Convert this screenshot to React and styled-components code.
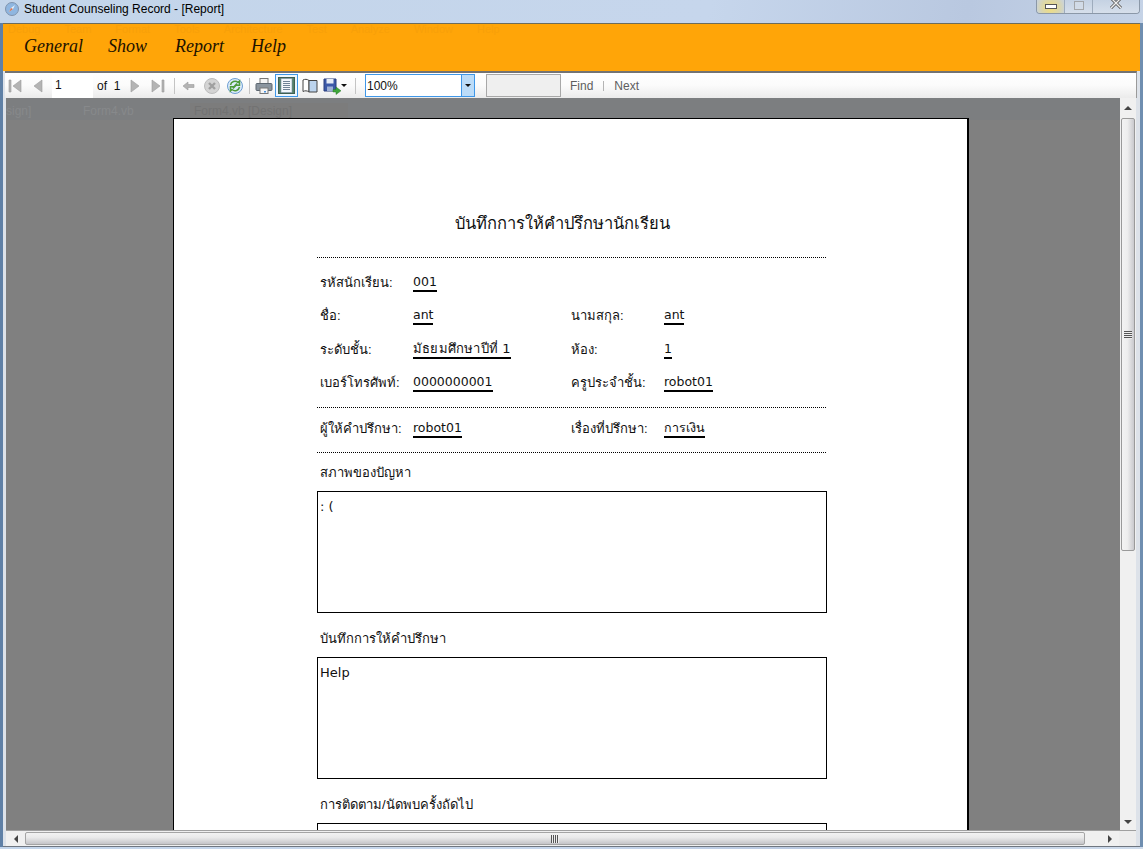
import React from "react";
import styled, { createGlobalStyle } from "styled-components";

const GlobalStyle = createGlobalStyle`
  html, body {
    margin: 0;
    padding: 0;
    width: 1143px;
    height: 849px;
    overflow: hidden;
    font-family: "Liberation Sans", "Noto Sans", "DejaVu Sans", sans-serif;
  }
`;

const App = () => {
  return (
    <Wrapper>
      <GlobalStyle />
      <TitleBar>
        <AppIcon viewBox="0 0 16 16">
          <circle cx="8" cy="8" r="6.5" fill="#8fb6e0" stroke="#7f93ad" />
          <path d="M5 11l4-3 2-4-4 3z" fill="#e9f2fb" />
          <path d="M5 11l4-3-2-1z" fill="#d9734e" />
        </AppIcon>
        <TitleText>Student Counseling Record - [Report]</TitleText>
        <WindowButtons>
          <WinButton $active>
            <MinGlyph />
          </WinButton>
          <WinButton>
            <MaxGlyph />
          </WinButton>
          <WinButton $wide>
            <svg width="16" height="12" viewBox="0 0 16 12">
              <path d="M3 1l10 10M13 1L3 11" stroke="#555" strokeWidth="3" />
              <path d="M3 1l10 10M13 1L3 11" stroke="#eee" strokeWidth="1.4" />
            </svg>
          </WinButton>
        </WindowButtons>
      </TitleBar>
      <Frame>
        <MenuBar>
          <MenuItem $w={84}>General</MenuItem>
          <MenuItem $w={67}>Show</MenuItem>
          <MenuItem $w={76}>Report</MenuItem>
          <MenuItem $w={50}>Help</MenuItem>
          <GhostMenu>
            {["Debug", "Team", "Format", "Tools", "Architecture", "Test", "Analyze", "Window", "Help"].map((t) => (
              <span key={t}>{t}</span>
            ))}
          </GhostMenu>
        </MenuBar>
        <Toolbar>
          <ToolBtn $ml={-2}><Arrow d="M3 3h2v12H3zM15 3v12L7 9z" /></ToolBtn>
          <ToolBtn><Arrow d="M13 3v12L5 9z" /></ToolBtn>
          <PageInput>1</PageInput>
          <OfLabel>of&nbsp;&nbsp;1</OfLabel>
          <ToolBtn><Arrow d="M5 3v12l8-6z" /></ToolBtn>
          <ToolBtn><Arrow d="M3 3v12l8-6zM13 3h2v12h-2z" /></ToolBtn>
          <Sep $ml={5} />
          <ToolBtn $ml={2}><Arrow d="M3 9l5-4v2.500h6v3H8V13z" /></ToolBtn>
          <ToolBtn>
            <svg width="18" height="18" viewBox="0 0 18 18">
              <circle cx="9" cy="9" r="7.5" fill="#d4d4d4" stroke="#bcbcbc" />
              <path d="M6 6l6 6M12 6l-6 6" stroke="#a0a0a0" strokeWidth="2.4" />
            </svg>
          </ToolBtn>
          <ToolBtn>
            <svg width="18" height="18" viewBox="0 0 18 18">
              <circle cx="9" cy="9" r="7.5" fill="#dcebfa" stroke="#6d9ed2" />
              <path d="M4.500 8a4.500 4.500 0 0 1 7.500-2.500L13.500 4v4.200H9.400L11 6.600" fill="none" stroke="#4d9a3a" strokeWidth="1.5" />
              <path d="M13.500 10a4.500 4.500 0 0 1-7.500 2.500L4.500 14V9.800h4.100L7 11.400" fill="none" stroke="#4d9a3a" strokeWidth="1.5" />
            </svg>
          </ToolBtn>
          <Sep $ml={3} />
          <ToolBtn $ml={2}>
            <svg width="18" height="18" viewBox="0 0 18 18">
              <rect x="5" y="1.5" width="8" height="6" fill="#f4f4f4" stroke="#777" />
              <rect x="1" y="6.5" width="16" height="7" rx="1" fill="#8a949e" stroke="#5c6670" />
              <rect x="5" y="11" width="8" height="5.5" fill="#f4f4f4" stroke="#777" />
              <rect x="9" y="14" width="2" height="1.5" fill="#4a90d9" />
            </svg>
          </ToolBtn>
          <SelectedBtn>
            <svg width="17" height="17" viewBox="0 0 17 17">
              <rect x="0.5" y="0.5" width="16" height="16" fill="#55806a" stroke="#3f5f50" />
              <rect x="3" y="1.500" width="11" height="14" fill="#f3f7fb" stroke="#7c8fa3" strokeWidth=".6" />
              <path d="M5 4.500h7M5 6.500h7M5 8.500h7M5 10.500h7M5 12.500h7" stroke="#6f8296" />
            </svg>
          </SelectedBtn>
          <ToolBtn>
            <svg width="18" height="18" viewBox="0 0 18 18">
              <path d="M2 3c2-1 4-1 6 .5V15c-2-1.500-4-1.500-6-.5z" fill="#fff" stroke="#444" />
              <path d="M8 3.500h8V15H8z" fill="#bcd4ee" stroke="#444" />
            </svg>
          </ToolBtn>
          <ToolBtn>
            <svg width="20" height="18" viewBox="0 0 20 18">
              <path d="M1 2h12v12H1z" fill="#3c59a8" stroke="#2b3f7c" />
              <path d="M3.500 2h7v4.500h-7z" fill="#e6ecf6" />
              <path d="M4 9.500h6V14H4z" fill="#9db0d6" />
              <path d="M13 10v2.500h-3V15h3v2.500l5-3.700z" fill="#3ea63a" stroke="#2a7a2a" strokeWidth=".5" />
            </svg>
          </ToolBtn>
          <SmallCaret />
          <Sep $ml={8} />
          <ZoomBox>
            <ZoomValue>100%</ZoomValue>
            <ZoomDrop><SmallCaret $flat /></ZoomDrop>
          </ZoomBox>
          <FindInput />
          <FindLink $ml={9}>Find</FindLink>
          <FindDivider />
          <FindLink>Next</FindLink>
        </Toolbar>
        <ViewerRow>
          <Viewer>
            <GhostBand>
              <GhostWord $w={77}>sign]</GhostWord>
              <GhostWord $w={107}>Form4.vb</GhostWord>
              <GhostTab>Form4.vb [Design]</GhostTab>
            </GhostBand>
            <Page>
              <ReportTitle>บันทึกการให้คำปรึกษานักเรียน</ReportTitle>
              <Dotted />
              <FieldGrid $top={8}>
                <FieldLabel>รหัสนักเรียน:</FieldLabel>
                <FieldValue><Under>001</Under></FieldValue>
                <span />
                <span />
                <FieldLabel>ชื่อ:</FieldLabel>
                <FieldValue><Under>ant</Under></FieldValue>
                <FieldLabel>นามสกุล:</FieldLabel>
                <FieldValue><Under>ant</Under></FieldValue>
                <FieldLabel>ระดับชั้น:</FieldLabel>
                <FieldValue><Under $thai>มัธยมศึกษาปีที่ 1</Under></FieldValue>
                <FieldLabel>ห้อง:</FieldLabel>
                <FieldValue><Under>1</Under></FieldValue>
                <FieldLabel>เบอร์โทรศัพท์:</FieldLabel>
                <FieldValue><Under>0000000001</Under></FieldValue>
                <FieldLabel>ครูประจำชั้น:</FieldLabel>
                <FieldValue><Under>robot01</Under></FieldValue>
              </FieldGrid>
              <Dotted $top={7} />
              <FieldGrid $top={4}>
                <FieldLabel>ผู้ให้คำปรึกษา:</FieldLabel>
                <FieldValue><Under>robot01</Under></FieldValue>
                <FieldLabel>เรื่องที่ปรึกษา:</FieldLabel>
                <FieldValue><Under>การเงิน</Under></FieldValue>
              </FieldGrid>
              <Dotted $top={6} />
              <BoxLabel $top={10}>สภาพของปัญหา</BoxLabel>
              <TextBox>: (</TextBox>
              <BoxLabel $top={16}>บันทึกการให้คำปรึกษา</BoxLabel>
              <TextBox>Help</TextBox>
              <BoxLabel $top={16}>การติดตาม/นัดพบครั้งถัดไป</BoxLabel>
              <TextBox />
            </Page>
          </Viewer>
          <VScroll>
            <ScrollArrow $h={20}><Tri $dir="up" /></ScrollArrow>
            <VThumb>
              <Grip />
            </VThumb>
            <VTrack />
            <ScrollArrow $h={17}><Tri $dir="down" /></ScrollArrow>
          </VScroll>
        </ViewerRow>
        <HScroll>
          <HArrow $w={19}><Tri $dir="left" /></HArrow>
          <HThumb>
            <GripV />
          </HThumb>
          <HTrack />
          <HArrow $w={18}><Tri $dir="right" /></HArrow>
          <Corner />
        </HScroll>
      </Frame>
    </Wrapper>
  );
};

export default App;

const Arrow = ({ d }) => (
  <svg width="18" height="18" viewBox="0 0 18 18">
    <path d={d} fill="#b4b4b4" stroke="#9c9c9c" strokeWidth=".6" />
  </svg>
);

const Wrapper = styled.div`
  width: 1143px;
  height: 849px;
  display: flex;
  flex-direction: column;
  overflow: hidden;
  background: linear-gradient(100deg, #c3d5ea 0%, #c6d6ec 55%, #b9c8e0 75%, #cfdcec 100%);
`;

const TitleBar = styled.div`
  height: 23px;
  flex: none;
  display: flex;
  align-items: flex-start;
  padding-left: 4px;
  box-sizing: border-box;
`;

const AppIcon = styled.svg`
  width: 16px;
  height: 16px;
  margin-top: 1px;
`;

const TitleText = styled.div`
  margin-left: 4px;
  font-size: 12px;
  line-height: 18px;
  color: #000;
`;

const WindowButtons = styled.div`
  margin-left: auto;
  margin-right: 3px;
  display: flex;
  height: 13px;
  border: 1px solid #8b98a8;
  border-top: none;
  border-radius: 0 0 4px 4px;
  overflow: hidden;
`;

const WinButton = styled.div`
  width: ${(p) => (p.$wide ? "46px" : "27px")};
  height: 13px;
  display: flex;
  align-items: flex-start;
  justify-content: center;
  border-right: 1px solid #9eacbd;
  background: ${(p) =>
    p.$active
      ? "radial-gradient(circle at 50% 60%, #f2de7a 0%, #d9d6b0 60%, #c9d3df 100%)"
      : "linear-gradient(#c5d2e3, #d6dfeb)"};
  svg {
    margin-top: -3px;
  }
  &:last-child {
    border-right: none;
  }
`;

const MinGlyph = styled.div`
  width: 10px;
  height: 3px;
  margin-top: 4px;
  background: #fff;
  border: 1px solid #555;
`;

const MaxGlyph = styled.div`
  width: 8px;
  height: 7px;
  margin-top: 1px;
  background: #d4dce8;
  border: 1px solid #9a9a9a;
  opacity: 0.8;
`;

const Frame = styled.div`
  flex: 1;
  min-height: 0;
  margin: 0 3px 2px 3px;
  display: flex;
  flex-direction: column;
  background: #dde2e9;
  border-bottom: 1px solid #6f7680;
  box-shadow: -3px 0 0 #5f80a6, 3px 0 0 #6f8eb0;
`;

const MenuBar = styled.div`
  height: 48px;
  flex: none;
  box-sizing: border-box;
  border-top: 1px solid #6c6c5c;
  background: #ffa508;
  display: flex;
  align-items: center;
  padding: 0 0 3px 21px;
  position: relative;
`;

const MenuItem = styled.div`
  width: ${(p) => p.$w}px;
  font-family: "Liberation Serif", serif;
  font-style: italic;
  font-size: 18px;
  line-height: 14px;
  height: 14px;
  color: #1c1200;
`;

const GhostMenu = styled.div`
  position: absolute;
  left: 5px;
  top: 0;
  display: flex;
  gap: 24px;
  font-size: 11px;
  line-height: 11px;
  color: #f8a008;
`;

const Toolbar = styled.div`
  height: 27px;
  flex: none;
  box-sizing: border-box;
  margin-left: 2px;
  margin-right: 3px;
  border-top: 2px solid #737373;
  border-right: 1px solid #9a9a9a;
  background: linear-gradient(#ffffff 0%, #fbfbfb 50%, #ebebeb 100%);
  display: flex;
  align-items: center;
`;

const ToolBtn = styled.div`
  width: 23px;
  height: 23px;
  flex: none;
  margin-left: ${(p) => p.$ml || 0}px;
  display: flex;
  align-items: center;
  justify-content: center;
`;

const SelectedBtn = styled(ToolBtn)`
  box-sizing: border-box;
  border: 1px solid #3f97e8;
  background: #eef6fd;
`;

const PageInput = styled.div`
  width: 41px;
  height: 24px;
  flex: none;
  box-sizing: border-box;
  margin-left: 3px;
  padding: 4px 0 0 3px;
  background: #fff;
  font-size: 12px;
  color: #111;
`;

const OfLabel = styled.div`
  margin-left: 4px;
  width: 26px;
  flex: none;
  font-size: 12px;
  color: #111;
  white-space: nowrap;
`;

const Sep = styled.div`
  width: 1px;
  height: 16px;
  flex: none;
  margin-left: ${(p) => p.$ml || 0}px;
  background: #c4c4c4;
`;

const SmallCaret = styled.div`
  width: 0;
  height: 0;
  flex: none;
  margin-left: ${(p) => (p.$flat ? 0 : -3)}px;
  border-left: 3px solid transparent;
  border-right: 3px solid transparent;
  border-top: 3px solid #111;
`;

const ZoomBox = styled.div`
  width: 110px;
  height: 23px;
  flex: none;
  box-sizing: border-box;
  margin-left: 9px;
  border: 1px solid #3f97e8;
  background: #fff;
  display: flex;
`;

const ZoomValue = styled.div`
  flex: 1;
  padding: 4px 0 0 1px;
  font-size: 12px;
  color: #111;
`;

const ZoomDrop = styled.div`
  width: 12px;
  border-left: 1px solid #3f97e8;
  background: #bcdcf8;
  display: flex;
  align-items: center;
  justify-content: center;
`;

const FindInput = styled.div`
  width: 75px;
  height: 23px;
  flex: none;
  box-sizing: border-box;
  margin-left: 11px;
  border: 1px solid #a8a8a8;
  background: #efefef;
`;

const FindLink = styled.div`
  margin-left: ${(p) => p.$ml || 0}px;
  font-size: 12px;
  color: #5e5e5e;
`;

const FindDivider = styled.div`
  width: 1px;
  height: 10px;
  margin: 0 10px;
  background: #b4b4b4;
`;

const ViewerRow = styled.div`
  flex: 1;
  min-height: 0;
  margin: 0 4px 0 3px;
  display: flex;
`;

const Viewer = styled.div`
  flex: 1;
  min-width: 0;
  background: #808080;
  padding-top: 20px;
  position: relative;
  overflow: hidden;
  display: flex;
  justify-content: flex-start;
`;

const GhostBand = styled.div`
  position: absolute;
  left: 0;
  right: 0;
  top: 0;
  height: 22px;
  padding-top: 5px;
  box-sizing: border-box;
  display: flex;
  background: #7c7e80;
  font-size: 12px;
  line-height: 16px;
`;

const GhostWord = styled.div`
  width: ${(p) => p.$w}px;
  flex: none;
  color: #87898b;
`;

const GhostTab = styled.div`
  width: 158px;
  flex: none;
  padding-left: 4px;
  box-sizing: border-box;
  color: #727272;
  background: #7c7c7c;
`;

const Page = styled.div`
  margin-left: 167px;
  width: 796px;
  height: 900px;
  flex: none;
  box-sizing: border-box;
  border: 1px solid #000;
  border-right-width: 2px;
  background: #fff;
  padding: 90px 0 0 143px;
  position: relative;
  color: #111;
`;

const ReportTitle = styled.div`
  width: 490px;
  height: 28px;
  text-align: center;
  font-size: 16.5px;
  line-height: 28px;
`;

const Dotted = styled.div`
  width: 509px;
  margin-top: ${(p) => (p.$top === undefined ? 20 : p.$top)}px;
  border-top: 1px dotted #000;
`;

const FieldGrid = styled.div`
  margin-top: ${(p) => p.$top}px;
  margin-left: 3px;
  display: grid;
  grid-template-columns: 93px 158px 93px 1fr;
  grid-auto-rows: 33.500px;
  width: 506px;
  font-size: 13px;
  align-items: center;
`;

const FieldLabel = styled.div`
  line-height: 20px;
  white-space: nowrap;
`;

const FieldValue = styled.div`
  line-height: 16px;
  white-space: nowrap;
`;

const Under = styled.span`
  display: inline-block;
  font-family: "DejaVu Sans", "Noto Sans", sans-serif;
  font-size: ${(p) => (p.$thai ? "13px" : "12.5px")};
  letter-spacing: ${(p) => (p.$thai ? "0.2px" : "0")};
  border-bottom: 2px solid #000;
`;

const BoxLabel = styled.div`
  margin: ${(p) => p.$top}px 0 0 3px;
  font-size: 13px;
  line-height: 20px;
  height: 20px;
`;

const TextBox = styled.div`
  width: 510px;
  height: 122px;
  box-sizing: border-box;
  margin-top: 8px;
  border: 1px solid #000;
  padding: 6px 2px;
  font-size: 13px;
  line-height: 17px;
  font-family: "DejaVu Sans", "Noto Sans", sans-serif;
`;

const VScroll = styled.div`
  width: 16px;
  flex: none;
  display: flex;
  flex-direction: column;
  background: #f0f0f0;
`;

const ScrollArrow = styled.div`
  height: ${(p) => p.$h}px;
  flex: none;
  display: flex;
  align-items: center;
  justify-content: center;
`;

const Tri = styled.div`
  width: 0;
  height: 0;
  ${(p) =>
    p.$dir === "up"
      ? "border-left: 4px solid transparent; border-right: 4px solid transparent; border-bottom: 4px solid #444;"
      : p.$dir === "down"
      ? "border-left: 4px solid transparent; border-right: 4px solid transparent; border-top: 4px solid #444;"
      : p.$dir === "left"
      ? "border-top: 4px solid transparent; border-bottom: 4px solid transparent; border-right: 4px solid #444;"
      : "border-top: 4px solid transparent; border-bottom: 4px solid transparent; border-left: 4px solid #444;"}
`;

const VThumb = styled.div`
  height: 433px;
  flex: none;
  box-sizing: border-box;
  margin: 0 1px;
  border: 1px solid #9a9a9a;
  border-radius: 2px;
  background: linear-gradient(90deg, #f3f3f3 0%, #eeeeee 45%, #c9c9cd 100%);
  display: flex;
  align-items: center;
  justify-content: center;
`;

const Grip = styled.div`
  width: 8px;
  height: 8px;
  background: repeating-linear-gradient(#555 0 1px, #eee 1px 2px);
`;

const GripV = styled.div`
  width: 8px;
  height: 8px;
  background: repeating-linear-gradient(90deg, #555 0 1px, #eee 1px 2px);
`;

const VTrack = styled.div`
  flex: 1;
`;

const HScroll = styled.div`
  height: 16px;
  flex: none;
  margin: 0 4px 0 3px;
  box-sizing: border-box;
  border-top: 1px solid #a0a0a0;
  background: #f0f0f0;
  display: flex;
  align-items: stretch;
`;

const HArrow = styled.div`
  width: ${(p) => p.$w}px;
  flex: none;
  display: flex;
  align-items: center;
  justify-content: center;
`;

const HThumb = styled.div`
  width: 1060px;
  flex: none;
  box-sizing: border-box;
  border: 1px solid #a4a4a4;
  border-radius: 2px;
  margin: 1px 0;
  background: linear-gradient(#f2f2f2 0%, #eaeaea 40%, #c4c4c8 100%);
  display: flex;
  align-items: center;
  justify-content: center;
`;

const HTrack = styled.div`
  flex: 1;
`;

const Corner = styled.div`
  width: 17px;
  flex: none;
  background: #ededed;
`;
